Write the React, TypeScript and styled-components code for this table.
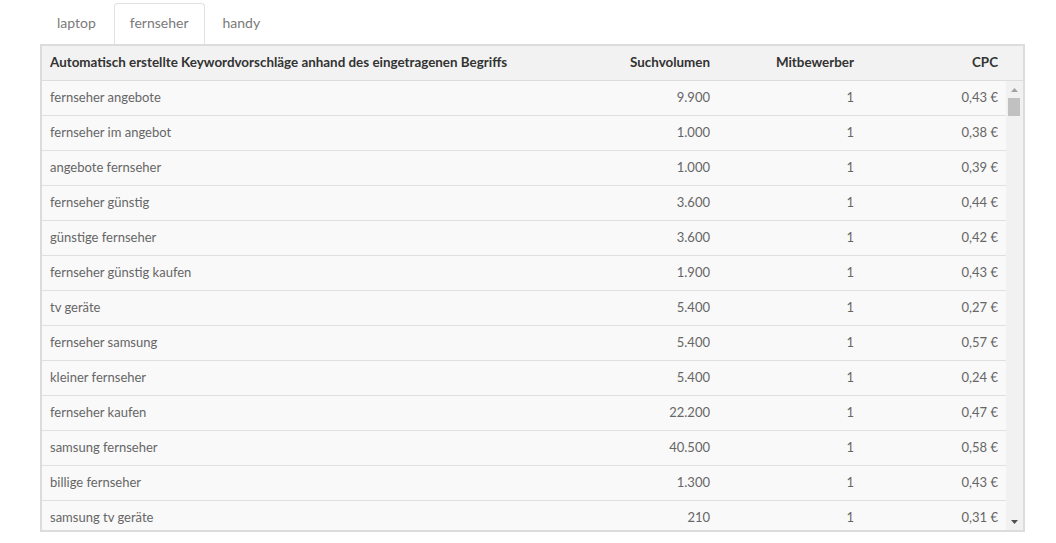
import React from "react";
import styled, { createGlobalStyle, css } from "styled-components";

const GlobalStyle = createGlobalStyle`
  html, body { margin: 0; padding: 0; background: #ffffff; }
  body { font-family: Lato, "Open Sans", "DejaVu Sans", sans-serif; }
  * { box-sizing: border-box; }
`;

const Page = styled.div`
  padding: 3px 31px 0 40px;
  width: 1056px;
`;

const TabList = styled.div`
  display: flex;
  gap: 2px;
  padding-left: 1px;
  height: 41px;
`;

const Tab = styled.div<{ $active?: boolean }>`
  height: 41px;
  padding: 0 15px;
  line-height: 37px;
  font-size: 14px;
  font-weight: 400;
  color: #7a7a7a;
  border: 1px solid transparent;
  border-bottom: none;
  border-radius: 4px 4px 0 0;
  ${(p) =>
    p.$active &&
    css`
      border-color: #e2e2e2;
      background: #ffffff;
    `}
`;

const Panel = styled.div`
  height: 488px;
  border: 2px solid #dcdcdc;
  display: flex;
  flex-direction: column;
  background: #f9f9f9;
`;

const cols = "1fr 144px 144px 144px";

const HeaderRow = styled.div`
  display: grid;
  grid-template-columns: ${cols} 17px;
  height: 35px;
  background: #f2f2f2;
  border-bottom: 1px solid #dddddd;
  flex: none;
`;

const HeaderCell = styled.div<{ $right?: boolean }>`
  padding: 0 8px;
  font-size: 13.4px;
  font-weight: 700;
  color: #333333;
  line-height: 33px;
  white-space: nowrap;
  text-align: ${(p) => (p.$right ? "right" : "left")};
`;

const Body = styled.div`
  flex: 1;
  min-height: 0;
  display: flex;
`;

const RowList = styled.div`
  flex: 1;
  min-width: 0;
  overflow: hidden;
  background: #f9f9f9;
`;

const Row = styled.div`
  display: grid;
  grid-template-columns: ${cols};
  height: 35px;
  border-bottom: 1px solid #e0e0e0;
  background: #f9f9f9;
`;

const Cell = styled.div<{ $right?: boolean }>`
  padding: 0 8px;
  font-size: 13px;
  font-weight: 400;
  color: #666666;
  line-height: 33px;
  white-space: nowrap;
  text-align: ${(p) => (p.$right ? "right" : "left")};
`;

const Scrollbar = styled.div`
  width: 17px;
  flex: none;
  display: flex;
  flex-direction: column;
  background: #f1f1f1;
`;

const ScrollButton = styled.div`
  height: 17px;
  flex: none;
  display: flex;
  align-items: center;
  justify-content: center;
`;

const Track = styled.div`
  flex: 1;
  display: flex;
  flex-direction: column;
`;

const Thumb = styled.div`
  height: 18px;
  margin: 0 3px 0 2px;
  background: #c1c1c1;
`;

type Item = { kw: string; vol: string; comp: string; cpc: string };

const items: Item[] = [
  { kw: "fernseher angebote", vol: "9.900", comp: "1", cpc: "0,43 €" },
  { kw: "fernseher im angebot", vol: "1.000", comp: "1", cpc: "0,38 €" },
  { kw: "angebote fernseher", vol: "1.000", comp: "1", cpc: "0,39 €" },
  { kw: "fernseher günstig", vol: "3.600", comp: "1", cpc: "0,44 €" },
  { kw: "günstige fernseher", vol: "3.600", comp: "1", cpc: "0,42 €" },
  { kw: "fernseher günstig kaufen", vol: "1.900", comp: "1", cpc: "0,43 €" },
  { kw: "tv geräte", vol: "5.400", comp: "1", cpc: "0,27 €" },
  { kw: "fernseher samsung", vol: "5.400", comp: "1", cpc: "0,57 €" },
  { kw: "kleiner fernseher", vol: "5.400", comp: "1", cpc: "0,24 €" },
  { kw: "fernseher kaufen", vol: "22.200", comp: "1", cpc: "0,47 €" },
  { kw: "samsung fernseher", vol: "40.500", comp: "1", cpc: "0,58 €" },
  { kw: "billige fernseher", vol: "1.300", comp: "1", cpc: "0,43 €" },
  { kw: "samsung tv geräte", vol: "210", comp: "1", cpc: "0,31 €" },
];

export default function App() {
  return (
    <>
      <GlobalStyle />
      <Page>
        <TabList>
          <Tab>laptop</Tab>
          <Tab $active>fernseher</Tab>
          <Tab>handy</Tab>
        </TabList>
        <Panel>
          <HeaderRow>
            <HeaderCell>Automatisch erstellte Keywordvorschläge anhand des eingetragenen Begriffs</HeaderCell>
            <HeaderCell $right>Suchvolumen</HeaderCell>
            <HeaderCell $right>Mitbewerber</HeaderCell>
            <HeaderCell $right>CPC</HeaderCell>
            <div />
          </HeaderRow>
          <Body>
            <RowList>
              {items.map((it, i) => (
                <Row key={i}>
                  <Cell>{it.kw}</Cell>
                  <Cell $right>{it.vol}</Cell>
                  <Cell $right>{it.comp}</Cell>
                  <Cell $right>{it.cpc}</Cell>
                </Row>
              ))}
            </RowList>
            <Scrollbar>
              <ScrollButton>
                <svg width="7" height="4" viewBox="0 0 7 4">
                  <polygon points="3.5,0 7,4 0,4" fill="#a3a3a3" />
                </svg>
              </ScrollButton>
              <Track>
                <Thumb />
              </Track>
              <ScrollButton>
                <svg width="7" height="4" viewBox="0 0 7 4">
                  <polygon points="0,0 7,0 3.5,4" fill="#505050" />
                </svg>
              </ScrollButton>
            </Scrollbar>
          </Body>
        </Panel>
      </Page>
    </>
  );
}
